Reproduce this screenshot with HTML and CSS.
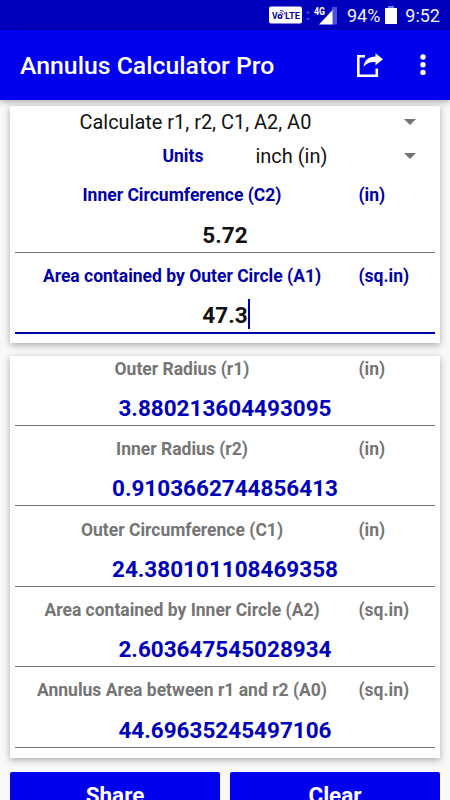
FILE: index.html
```html
<!DOCTYPE html>
<html lang="en">
<head>
<meta charset="utf-8">
<title>Annulus Calculator Pro</title>
<link rel="stylesheet" href="styles.css">
</head>
<body>
<header class="status">
  <svg class="status-icons" width="72" height="20" viewBox="0 0 72 20">
    <rect x="0" y="1.500" width="33" height="17" rx="2" fill="#fff"/>
    <text class="volte" x="3" y="13.500">V</text>
    <text class="volte" x="16" y="13.500" textLength="15" lengthAdjust="spacingAndGlyphs">LTE</text>
    <circle cx="11" cy="11.500" r="1.800" fill="none" stroke="#0000a8" stroke-width="1.400"/>
    <path d="M10.500 7.800c2-.6 3.500.5 3.500 2.400M11 5.700c3-.5 4.800 1.200 4.800 3.600" fill="none" stroke="#0000a8" stroke-width=".8"/>
    <path d="M37 8.500l2-2.500 2 2.500zM37 13l2 2.500 2-2.500z" fill="#4c4cdc"/>
    <text class="network" x="45" y="10" textLength="11" lengthAdjust="spacingAndGlyphs">4G</text>
    <path d="M63 2h5v17.500h-5z" fill="#5050df"/>
    <path d="M50 19.500L63.500 5v14.500z" fill="#fff"/>
  </svg>
  <span class="percent">94%</span>
  <svg class="battery" width="12" height="18" viewBox="0 0 12 18"><path d="M3 0h6v2H3z" fill="#7474e8"/><path d="M0 2h12v16H0z" fill="#fff"/></svg>
  <span class="clock">9:52</span>
</header>
<div class="appbar">
  <h1>Annulus Calculator Pro</h1>
  <svg class="share-icon" width="28" height="26" viewBox="0 0 28 26">
    <path d="M9 4.200H2.300v19.500h18.500V16.500" fill="none" stroke="#fff" stroke-width="2.600"/>
    <path d="M19.500 1.200L27 7.200l-7.500 6V10C14 9.700 10.500 11 7.500 14.800 8.300 8.300 12.500 4.900 19.500 4.600z" fill="#fff"/>
  </svg>
  <svg class="more-icon" width="6" height="22" viewBox="0 0 6 22" fill="#fff"><circle cx="3" cy="3" r="2.700"/><circle cx="3" cy="10.700" r="2.700"/><circle cx="3" cy="18.400" r="2.700"/></svg>
</div>
<main>
  <section class="card inputs">
    <div class="select mode"><span>Calculate r1, r2, C1, A2, A0</span><i class="arrow"></i></div>
    <div class="select units"><b>Units</b><span>inch (in)</span><i class="arrow"></i></div>
    <div class="field"><div class="label"><span>Inner Circumference (C2)</span><span>(in)</span></div><div class="value">5.72</div></div>
    <div class="field active"><div class="label"><span>Area contained by Outer Circle (A1)</span><span>(sq.in)</span></div><div class="value"><span class="caret">47.3</span></div></div>
  </section>
  <section class="card results">
    <div class="field"><div class="label"><span>Outer Radius (r1)</span><span>(in)</span></div><div class="value">3.880213604493095</div></div>
    <div class="field"><div class="label"><span>Inner Radius (r2)</span><span>(in)</span></div><div class="value">0.9103662744856413</div></div>
    <div class="field"><div class="label"><span>Outer Circumference (C1)</span><span>(in)</span></div><div class="value">24.380101108469358</div></div>
    <div class="field"><div class="label"><span>Area contained by Inner Circle (A2)</span><span>(sq.in)</span></div><div class="value">2.603647545028934</div></div>
    <div class="field"><div class="label"><span>Annulus Area between r1 and r2 (A0)</span><span>(sq.in)</span></div><div class="value">44.69635245497106</div></div>
  </section>
  <div class="actions"><button>Share</button><button>Clear</button></div>
</main>
</body>
</html>
```
FILE: styles.css
```css
* { box-sizing: border-box; }
body {
  margin: 0;
  height: 800px;
  overflow: hidden;
  background: #f8f8f8;
  font-family: Roboto, sans-serif;
}
.status {
  display: flex;
  align-items: center;
  height: 30px;
  padding: 0 10px 0 269px;
  background: #0000bc;
  color: #f2f2ff;
  font-size: 18px;
}
.status-icons { flex: none; margin-top: -1px; }
.volte { font: 700 8.500px Roboto, sans-serif; fill: #0000a8; }
.network { font: 700 10px Roboto, sans-serif; fill: #fff; }
.percent { margin-left: 6px; width: 38px; line-height: 30px; padding-top: 2px; }
.battery { flex: none; }
.clock { margin-left: auto; line-height: 30px; padding-top: 2px; }
.appbar {
  position: relative;
  display: flex;
  align-items: center;
  height: 70px;
  padding: 0 24.500px 0 20px;
  background: #0000ee;
  color: #fff;
  box-shadow: 0 2px 6px rgba(0, 0, 0, .3);
}
h1 {
  flex: 1;
  margin: 0;
  padding-top: 1px;
  font-size: 24.800px;
  font-weight: 500;
  white-space: nowrap;
}
.share-icon { margin-right: 35.500px; }
main { padding: 6px 10px 0; }
.card {
  padding: 0 5px;
  background: #fff;
  box-shadow: 0 2px 7px rgba(0, 0, 0, .32);
}
.inputs { height: 237px; color: #111; }
.results { height: 402px; margin-top: 13px; }
.select {
  display: flex;
  align-items: center;
  height: 32px;
  padding-right: 19px;
  font-size: 19.950px;
}
.mode { padding-left: 64.500px; }
.units { height: 34.200px; padding: 1.500px 19px 0 147.500px; }
.units b { width: 93px; font-size: 17.500px; color: #0000a8; }
.arrow {
  margin-left: auto;
  border: 6px solid transparent;
  border-top-color: #757575;
  border-bottom: 0;
}
.field {
  height: 80.400px;
  padding-top: 11.300px;
  border-bottom: 1px solid #757575;
}
.label {
  display: grid;
  grid-template-columns: 334px 1fr;
  column-gap: 9.500px;
  line-height: 24px;
  font-size: 17.500px;
  font-weight: 700;
  color: #757575;
  white-space: nowrap;
}
.label > :first-child { text-align: center; }
.inputs .label { color: #0000a8; }
.value {
  margin-top: 13.200px;
  line-height: 28px;
  text-align: center;
  font-size: 22.500px;
  font-weight: 700;
}
.results .value { color: #0000bb; }
.results .field:first-child { height: 70px; padding-top: .9px; }
.inputs .active { height: 81.400px; border-bottom: 2px solid #0000a8; }
.caret { position: relative; }
.caret::after {
  content: "";
  position: absolute;
  left: 100%;
  top: -3px;
  width: 2px;
  height: 30px;
  background: #0000a8;
}
.actions {
  display: grid;
  grid-template-columns: 1fr 1fr;
  gap: 10px;
  margin-top: 13.500px;
}
button {
  height: 46px;
  padding: 0;
  border: 0;
  border-radius: 2px;
  background: #0000ee;
  color: #fff;
  font: 700 22.500px Roboto, sans-serif;
}
```
